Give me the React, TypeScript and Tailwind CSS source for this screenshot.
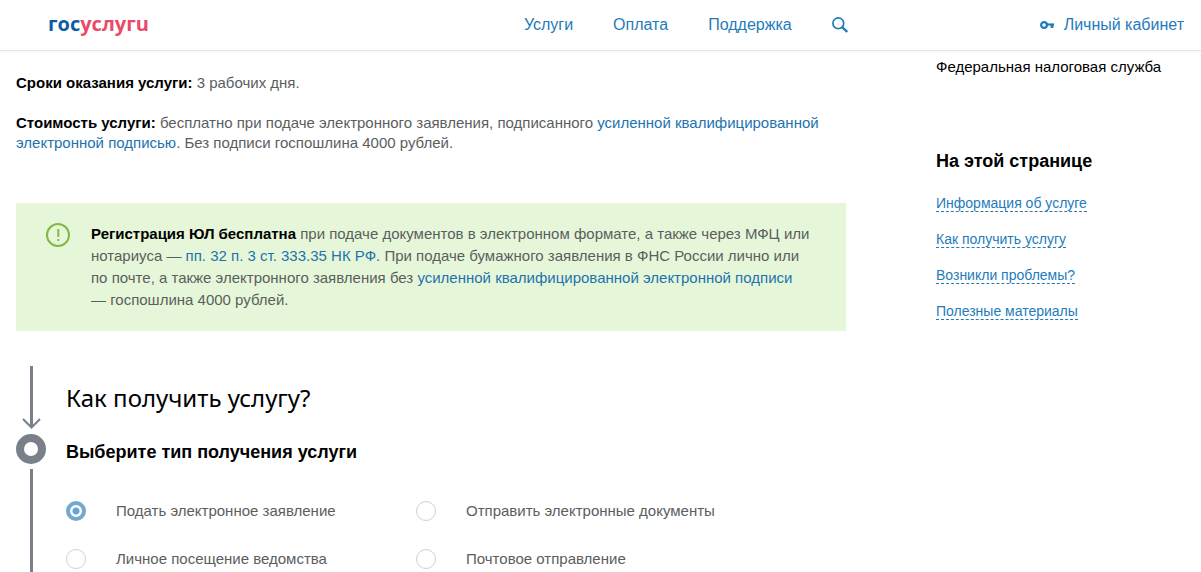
import { useState } from 'react'

const navItems = ['Услуги', 'Оплата', 'Поддержка']

const pageLinks = [
  'Информация об услуге',
  'Как получить услугу',
  'Возникли проблемы?',
  'Полезные материалы',
]

const receiveTypes = [
  { id: 'electronic', label: 'Подать электронное заявление' },
  { id: 'documents', label: 'Отправить электронные документы' },
  { id: 'visit', label: 'Личное посещение ведомства' },
  { id: 'post', label: 'Почтовое отправление' },
]

function SearchIcon() {
  return (
    <svg width="16" height="16" viewBox="0 0 16 16" fill="none" stroke="currentColor" aria-hidden="true">
      <circle cx="6.3" cy="6.3" r="5.4" strokeWidth="1.7" />
      <path d="M10 10l5.2 5" strokeWidth="2.4" />
    </svg>
  )
}

function KeyIcon() {
  return (
    <svg width="14" height="8" viewBox="0 0 14 8" fill="none" stroke="currentColor" aria-hidden="true">
      <circle cx="4" cy="4" r="2.9" strokeWidth="2.2" />
      <path d="M7 3.5h7" strokeWidth="2.2" />
      <path d="M12 3.5v3.5" strokeWidth="2.8" />
    </svg>
  )
}

function Header() {
  return (
    <header className="flex h-[51px] items-center border-b border-[#e4e5e8] pr-[17px] pl-12 text-base text-[#1f7bbb] shadow-[0_1px_2px_rgba(0,0,0,0.05)]">
      <div className="flex-1">
        <a href="#" aria-label="госуслуги" className="font-['Open_Sans',sans-serif] text-xl leading-6 font-bold text-[#ea4a68]">
          <span className="text-[#0d5ca3]">гос</span>услугu
        </a>
      </div>
      <nav className="mr-[192px] flex items-center gap-10">
        {navItems.map((item) => (
          <a key={item} href="#">{item}</a>
        ))}
        <button type="button" aria-label="Поиск">
          <SearchIcon />
        </button>
      </nav>
      <a href="#" className="flex items-center gap-[10px]">
        <KeyIcon />
        Личный кабинет
      </a>
    </header>
  )
}

function Notice() {
  return (
    <div className="mt-[50px] flex items-start gap-[21px] bg-[#e6f7d9] py-5 pr-9 pl-[30px]">
      <svg className="shrink-0" width="24" height="24" viewBox="0 0 24 24" fill="none" stroke="#82b944" strokeWidth="2" aria-hidden="true">
        <circle cx="12" cy="12" r="11" />
        <path d="M12.3 6v8M12.3 16v2" />
      </svg>
      <p className="leading-[22px]">
        <b className="text-black">Регистрация ЮЛ бесплатна</b> при подаче документов в электронном формате, а также через МФЦ или нотариуса —{' '}
        <a href="#" className="text-[#1d73ad]">пп. 32 п. 3 ст. 333.35 НК РФ</a>. При подаче бумажного заявления в ФНС России лично или по почте, а также электронного заявления без{' '}
        <a href="#" className="text-[#1d73ad]">усиленной квалифицированной электронной подписи</a> — госпошлина 4000 рублей.
      </p>
    </div>
  )
}

function HowToGet() {
  const [selected, setSelected] = useState('electronic')

  return (
    <section className="mt-[35px] flex flex-1 gap-5">
      {/* Step line */}
      <div className="flex w-[30px] shrink-0 flex-col items-center">
        <svg width="20" height="64" viewBox="0 0 20 64" fill="none" stroke="#7a808a" aria-hidden="true">
          <path d="M10.5 0v60" strokeWidth="3" />
          <path d="M2 53l8.5 8.5 8.5-8.5" strokeWidth="2" />
        </svg>
        <div className="mt-1 size-[30px] shrink-0 rounded-full border-8 border-[#7a808a]"></div>
        <div className="mt-[5px] w-[3px] flex-1 bg-[#7a808a]"></div>
      </div>

      <div className="flex-1 pt-4 pb-[3px]">
        <h2 className="font-['Noto_Sans',sans-serif] text-2xl leading-8 text-black">Как получить услугу?</h2>
        <fieldset className="mt-[26px]">
          <legend className="text-lg leading-6 font-bold text-black">Выберите тип получения услуги</legend>
          <div className="mt-[37px] grid grid-cols-[350px_1fr] gap-y-7">
            {receiveTypes.map((type) => (
              <label key={type.id} className="flex items-center gap-[30px] leading-5">
                <input
                  type="radio"
                  name="receive-type"
                  value={type.id}
                  checked={selected === type.id}
                  onChange={() => setSelected(type.id)}
                  className="size-5 shrink-0 appearance-none rounded-full border border-[#cfcfd6] bg-white checked:border-4 checked:border-[#73a9cf] checked:bg-[radial-gradient(circle,#67a3d0_3px,#ffffff_4px)]"
                />
                {type.label}
              </label>
            ))}
          </div>
        </fieldset>
      </div>
    </section>
  )
}

function Sidebar() {
  return (
    <aside className="w-[265px] shrink-0 pt-[6px]">
      <p className="leading-5 text-black">Федеральная налоговая служба</p>
      <h3 className="mt-[72px] text-lg leading-6 font-bold text-black">На этой странице</h3>
      <ul className="mt-[22px] flex flex-col gap-[19px] text-sm leading-4 text-[#1f7bbb]">
        {pageLinks.map((link) => (
          <li key={link} className="flex">
            <a href="#" className="border-b border-dashed border-[#1f7bbb]">{link}</a>
          </li>
        ))}
      </ul>
    </aside>
  )
}

export default function App() {
  return (
    <div className="flex min-h-screen flex-col bg-white font-['Liberation_Sans',Arial,sans-serif] text-[15px] text-[#5b5e5f]">
      <Header />
      <div className="flex flex-1 gap-[90px] pl-4">
        <main className="flex min-w-0 flex-1 flex-col pt-[22px]">
          <p className="leading-5">
            <b className="text-black">Сроки оказания услуги:</b> 3 рабочих дня.
          </p>
          <p className="mt-5 leading-5">
            <b className="text-black">Стоимость услуги:</b> бесплатно при подаче электронного заявления, подписанного{' '}
            <a href="#" className="text-[#1d73ad]">усиленной квалифицированной электронной подписью</a>. Без подписи госпошлина 4000 рублей.
          </p>
          <Notice />
          <HowToGet />
        </main>
        <Sidebar />
      </div>
    </div>
  )
}
